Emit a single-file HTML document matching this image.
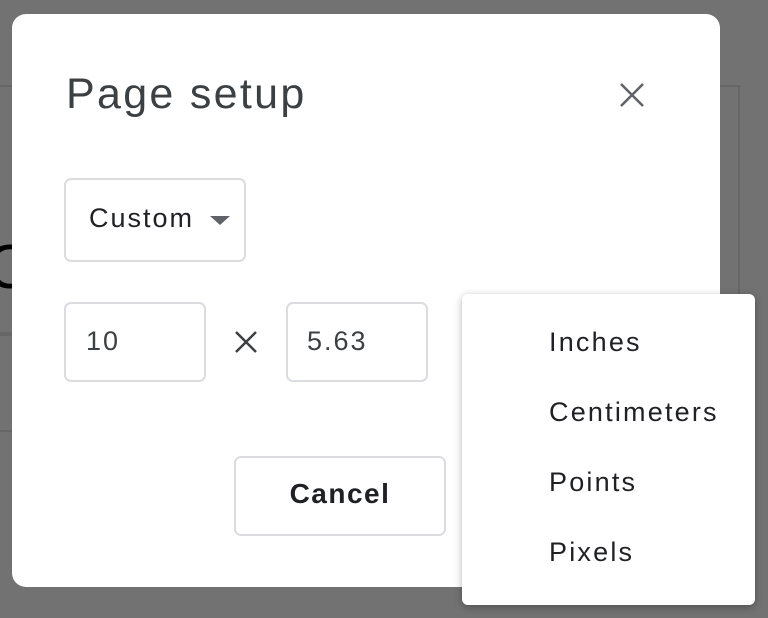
<!DOCTYPE html>
<html><head><style>
body{margin:0;width:768px;height:618px;background:#727272;position:relative;overflow:hidden;font-family:"Liberation Sans",Arial,sans-serif}
.bg{position:absolute;border:2px solid #666}
.dlg{position:absolute;left:12px;top:14px;width:708px;height:573px;background:#fff;border-radius:14px}
.t{position:absolute;left:66px;top:70px;font-size:43px;color:#3c4043;letter-spacing:2.3px}
.box{position:absolute;border:2px solid #dadce0;border-radius:7px;box-sizing:border-box;background:#fff}
.txt{position:absolute;font-size:27px;color:#202124;letter-spacing:2px}
.pop{position:absolute;left:462px;top:294px;width:293px;height:311px;background:#fff;border-radius:6px;box-shadow:0 2px 8px rgba(0,0,0,.3)}
.pop div{position:absolute;left:549px;left:87px;font-size:27px;color:#202124;letter-spacing:2.2px}
</style></head><body>
<div class="bg" style="left:-10px;top:85px;width:20px;height:245px"></div>
<div class="bg" style="left:-10px;top:334px;width:20px;height:94px"></div>
<div class="bg" style="left:700px;top:85px;width:36px;height:245px"></div>
<div style="position:absolute;left:-14px;top:232px;font-size:62px;color:#000">C</div>
<div class="dlg"></div>
<div class="t">Page setup</div>
<svg style="position:absolute;left:619px;top:82px" width="26" height="26"><path d="M2 2L24 24M24 2L2 24" stroke="#5f6368" stroke-width="2.5"/></svg>
<div class="box" style="left:64px;top:178px;width:182px;height:84px"></div>
<div class="txt" style="left:89px;top:203px">Custom</div>
<svg style="position:absolute;left:210px;top:216px" width="20" height="10"><path d="M0 0H20L10 9Z" fill="#5f6368"/></svg>
<div class="box" style="left:64px;top:302px;width:142px;height:80px"></div>
<div class="txt" style="left:86px;top:326px;color:#3c4043">10</div>
<svg style="position:absolute;left:234px;top:330px" width="24" height="24"><path d="M2 2L22 22M22 2L2 22" stroke="#3c4043" stroke-width="2.5"/></svg>
<div class="box" style="left:286px;top:302px;width:142px;height:80px"></div>
<div class="txt" style="left:307px;top:326px;color:#3c4043">5.63</div>
<div class="box" style="left:234px;top:456px;width:212px;height:80px"></div>
<div class="txt" style="left:234px;width:212px;text-align:center;top:478px;font-size:28px;font-weight:bold;color:#202124;letter-spacing:1.5px">Cancel</div>
<div class="pop">
<div style="top:33px">Inches</div>
<div style="top:103px">Centimeters</div>
<div style="top:173px">Points</div>
<div style="top:243px">Pixels</div>
</div>
</body></html>
